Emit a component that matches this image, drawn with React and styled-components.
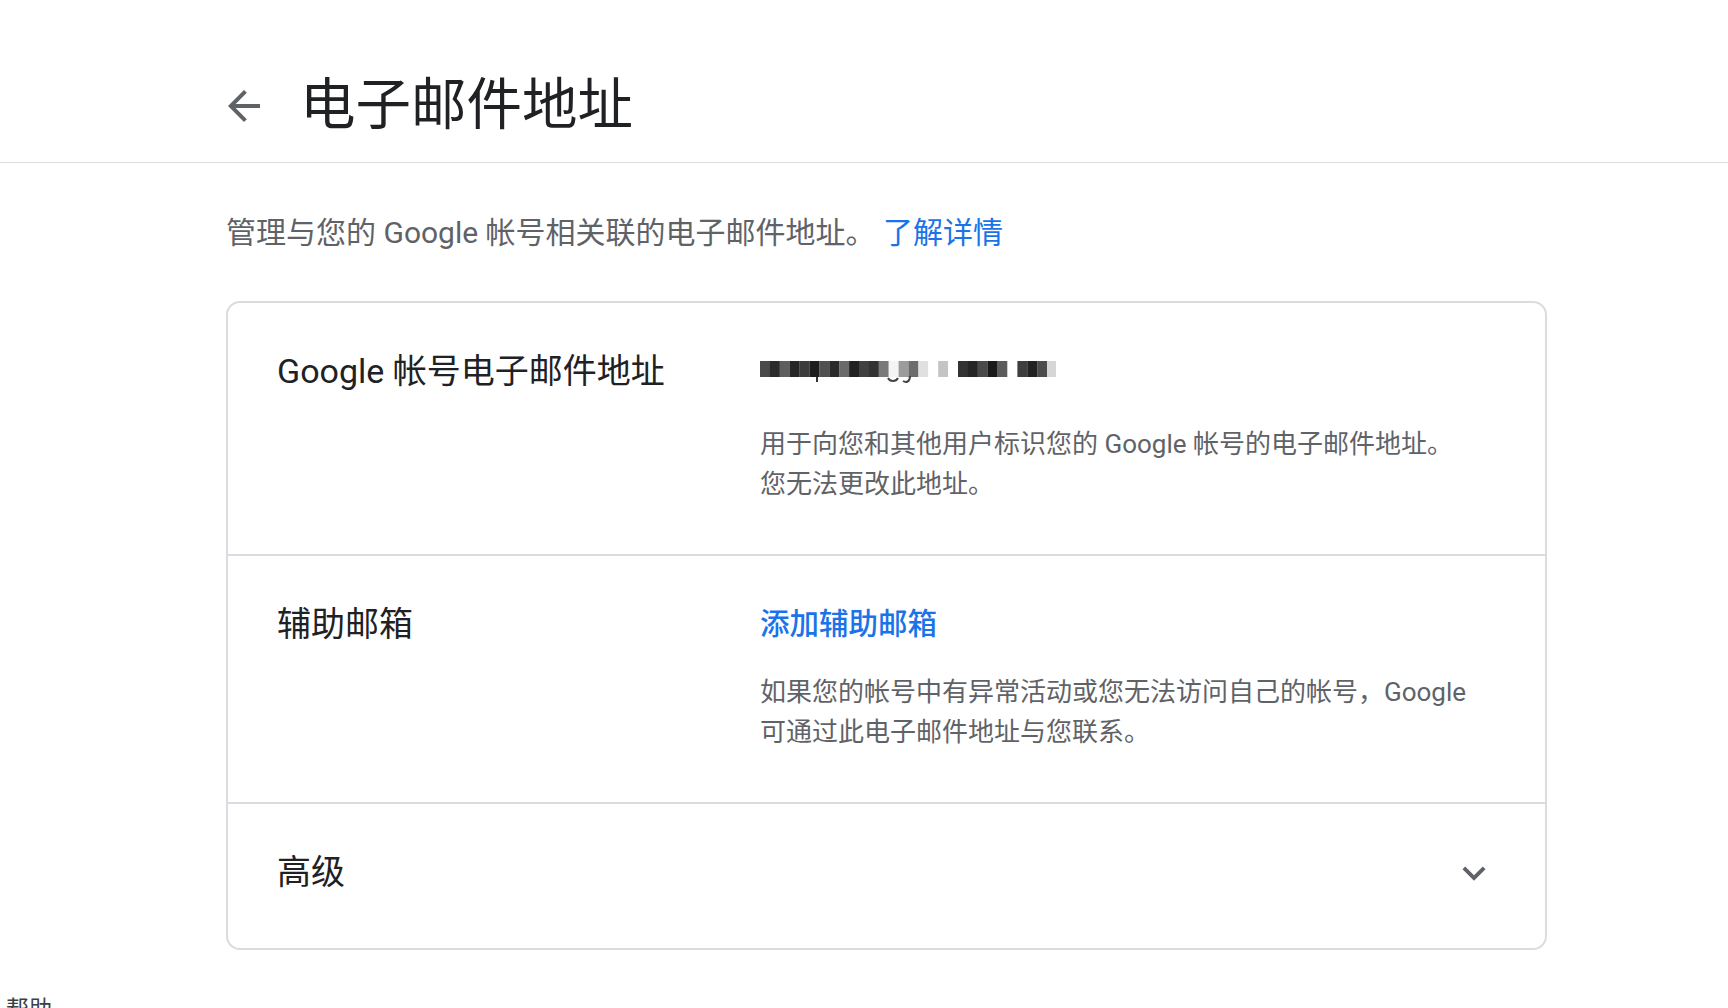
import styled, { createGlobalStyle } from "styled-components";

const GlobalStyle = createGlobalStyle`
  html, body {
    margin: 0;
    padding: 0;
    background: #ffffff;
  }
  body {
    font-family: Roboto, "Noto Sans CJK SC", "Noto Sans", sans-serif;
    color: #202124;
  }
`;

const Header = styled.header`
  border-bottom: 1px solid #dadce0;
  padding: 78px 0 28px 220px;
  display: flex;
  align-items: center;
  gap: 32px;
`;

const BackButton = styled.button`
  width: 48px;
  height: 48px;
  padding: 0;
  border: 0;
  background: none;
  color: #5f6368;
  display: flex;
  align-items: center;
  justify-content: center;
  cursor: pointer;

  svg {
    width: 48px;
    height: 48px;
    fill: currentColor;
  }
`;

const Title = styled.h1`
  margin: 0;
  font-size: 55.5px;
  line-height: 56px;
  font-weight: 400;
  color: #202124;
`;

const Main = styled.main`
  margin-left: 226px;
  width: 1321px;
`;

const Intro = styled.p`
  margin: 50px 0 48px;
  font-size: 30px;
  line-height: 40px;
  color: #5f6368;

  a {
    color: #1a73e8;
    text-decoration: none;
  }
`;

const Card = styled.section`
  border: 2px solid #dadce0;
  border-radius: 14px;
  overflow: hidden;
`;

const Row = styled.div`
  display: grid;
  grid-template-columns: 483px 1fr auto;
  align-items: start;
  padding: 48px 48px ${(p) => p.$bottom || 50}px 49px;

  & + & {
    border-top: 2px solid #dadce0;
  }
`;

const Label = styled.div`
  font-size: 34px;
  line-height: 40px;
  color: #202124;
`;

const Value = styled.div`
  display: flex;
  flex-direction: column;
  gap: ${(p) => p.$gap || 30}px;
`;

const Link = styled.a`
  font-size: 29.5px;
  line-height: 40px;
  font-weight: 500;
  color: #1a73e8;
  text-decoration: none;
`;

const Note = styled.div`
  font-size: 26px;
  line-height: 40px;
  color: #5f6368;
`;

const Masked = styled.div`
  height: 40px;
  display: flex;
  align-items: center;

  svg {
    display: block;
  }
`;

const Expand = styled.button`
  width: 46px;
  height: 46px;
  margin-top: -2px;
  padding: 0;
  border: 0;
  background: none;
  color: #5f6368;
  cursor: pointer;

  svg {
    width: 46px;
    height: 46px;
    fill: currentColor;
  }
`;

const Footer = styled.div`
  margin-top: 44px;
  padding-left: 6px;
  font-size: 23px;
  line-height: 32px;
  color: #3c4043;
`;

// pixelated address, drawn as a mosaic
const mosaic = [
  "#4a4a4a", "#2c2c2c", "#5e5e5e", "#262626", "#3c3c3c", "#1e1e1e", "#505050",
  "#2a2a2a", "#6a6a6a", "#222222", "#404040", "#333333", "#7a7a7a",
  "#f4f4f4", "#9c9c9c", "#6c6c6c", "#e0e0e0", "#ffffff", "#c4c4c4", "#ffffff",
  "#333333", "#262626", "#4a4a4a", "#1a1a1a", "#5c5c5c", "#ffffff",
  "#3e3e3e", "#222222", "#4c4c4c", "#d6d6d6",
];

const EmailMosaic = () => (
  <svg width="296" height="26" viewBox="0 0 296 26">
    {mosaic.map((c, i) => (
      <rect key={i} x={i * 9.9} y={3} width={10} height={16} fill={c} />
    ))}
    <path d="M128 20c2 4 8 4 10 0" stroke="#444" strokeWidth="2" fill="none" />
    <path d="M150 18c0 6-4 7-7 5" stroke="#444" strokeWidth="2" fill="none" />
    <rect x={56} y={19} width={2} height={5} fill="#333" />
  </svg>
);

export default function App() {
  return (
    <>
      <GlobalStyle />
      <Header>
        <BackButton aria-label="返回">
          <svg viewBox="0 0 24 24">
            <path d="M20 11H7.83l5.59-5.59L12 4l-8 8 8 8 1.41-1.41L7.83 13H20v-2z" />
          </svg>
        </BackButton>
        <Title>电子邮件地址</Title>
      </Header>
      <Main>
        <Intro>
          管理与您的 Google 帐号相关联的电子邮件地址。 <a href="#">了解详情</a>
        </Intro>
        <Card>
          <Row>
            <Label>Google 帐号电子邮件地址</Label>
            <Value $gap={33}>
              <Masked>
                <EmailMosaic />
              </Masked>
              <Note>
                用于向您和其他用户标识您的 Google 帐号的电子邮件地址。
                <br />
                您无法更改此地址。
              </Note>
            </Value>
          </Row>
          <Row>
            <Label>辅助邮箱</Label>
            <Value $gap={28}>
              <Link href="#">添加辅助邮箱</Link>
              <Note>
                如果您的帐号中有异常活动或您无法访问自己的帐号，Google
                <br />
                可通过此电子邮件地址与您联系。
              </Note>
            </Value>
          </Row>
          <Row $bottom={52}>
            <Label>高级</Label>
            <div />
            <Expand aria-label="展开">
              <svg viewBox="0 0 24 24">
                <path d="M16.59 8.59L12 13.17 7.41 8.59 6 10l6 6 6-6z" />
              </svg>
            </Expand>
          </Row>
        </Card>
      </Main>
      <Footer>帮助</Footer>
    </>
  );
}
